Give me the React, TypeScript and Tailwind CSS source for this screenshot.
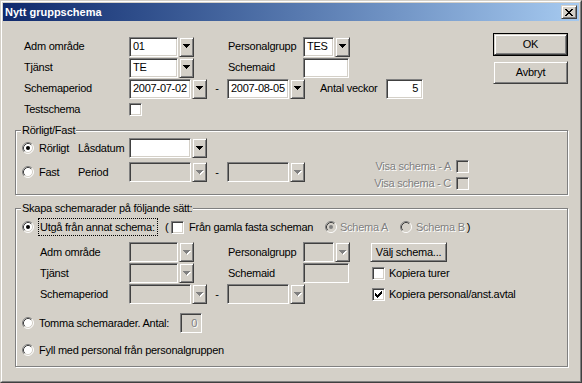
import React from "react";

const sunken =
  "border border-t-[#808080] border-l-[#808080] border-b-white border-r-white shadow-[inset_1px_1px_0_#404040,inset_-1px_-1px_0_#d4d0c8]";
const raised =
  "border border-t-[#d4d0c8] border-l-[#d4d0c8] border-b-[#404040] border-r-[#404040] shadow-[inset_1px_1px_0_#fff,inset_-1px_-1px_0_#808080]";
const dis = "text-[#808080] [text-shadow:1px_1px_0_#fff]";

function Arrow({ disabled }: { disabled?: boolean }) {
  const rects = (fill: string, dx: number, dy: number) => (
    <g fill={fill} transform={`translate(${dx},${dy})`}>
      <rect x="0" y="0" width="7" height="1" />
      <rect x="1" y="1" width="5" height="1" />
      <rect x="2" y="2" width="3" height="1" />
      <rect x="3" y="3" width="1" height="1" />
    </g>
  );
  return (
    <svg width="8" height="5" viewBox="0 0 8 5" shapeRendering="crispEdges">
      {disabled ? (
        <>
          {rects("#ffffff", 1, 1)}
          {rects("#808080", 0, 0)}
        </>
      ) : (
        rects("#000000", 0, 0)
      )}
    </svg>
  );
}

function DropBtn({ disabled }: { disabled?: boolean }) {
  return (
    <div className={`w-[15px] h-full bg-[#d4d0c8] flex items-center justify-center ${raised}`}>
      <Arrow disabled={disabled} />
    </div>
  );
}

function Combo({
  className,
  value,
  disabled,
}: {
  className: string;
  value?: string;
  disabled?: boolean;
}) {
  return (
    <div className={`flex h-[20px] gap-[1px] shrink-0 ${className}`}>
      <div
        className={`flex-1 h-full flex items-center pl-[3px] overflow-hidden ${sunken} ${
          disabled ? "bg-[#d4d0c8]" : "bg-white"
        }`}
      >
        {value}
      </div>
      <DropBtn disabled={disabled} />
    </div>
  );
}

function Field({
  className,
  value,
  disabled,
  right,
}: {
  className: string;
  value?: string;
  disabled?: boolean;
  right?: boolean;
}) {
  return (
    <div
      className={`h-[20px] flex items-center shrink-0 ${right ? "justify-end pr-[4px]" : "pl-[3px]"} ${sunken} ${
        disabled ? `bg-[#d4d0c8] ${dis}` : "bg-white"
      } ${className}`}
    >
      {value}
    </div>
  );
}

function Radio({ checked, disabled }: { checked?: boolean; disabled?: boolean }) {
  return (
    <svg width="12" height="12" viewBox="0 0 12 12" className="shrink-0">
      <circle cx="6" cy="6" r="5" fill={disabled ? "#d4d0c8" : "#ffffff"} />
      <path d="M2.11 9.89 A5.5 5.5 0 0 1 9.89 2.11" stroke="#808080" fill="none" />
      <path d="M9.89 2.11 A5.5 5.5 0 0 1 2.11 9.89" stroke="#ffffff" fill="none" />
      <path d="M2.82 9.18 A4.5 4.5 0 0 1 9.18 2.82" stroke="#404040" fill="none" />
      <path d="M9.18 2.82 A4.5 4.5 0 0 1 2.82 9.18" stroke="#d4d0c8" fill="none" />
      {checked && <circle cx="6" cy="6" r="2" fill={disabled ? "#808080" : "#000000"} />}
    </svg>
  );
}

function Check({ checked, disabled }: { checked?: boolean; disabled?: boolean }) {
  return (
    <div
      className={`w-[13px] h-[13px] shrink-0 flex items-center justify-center ${sunken} ${
        disabled ? "bg-[#d4d0c8]" : "bg-white"
      }`}
    >
      {checked && (
        <svg width="7" height="7" viewBox="0 0 7 7" shapeRendering="crispEdges">
          <path
            d="M0 2h1v1h1v1h1v-1h1v-1h1v-1h1v-1h1v3h-1v1h-1v1h-1v1h-1v1h-1v-1h-1v-1h-1v-1h-1z"
            fill="#000"
          />
        </svg>
      )}
    </div>
  );
}

function GroupBox({
  title,
  className,
  children,
}: {
  title: string;
  className: string;
  children: React.ReactNode;
}) {
  return (
    <div
      className={`relative border border-[#808080] shadow-[inset_1px_1px_0_#fff,1px_1px_0_#fff] ${className}`}
    >
      <span className="absolute left-[5px] top-[-8px] bg-[#d4d0c8] px-[1px] leading-[14px]">
        {title}
      </span>
      {children}
    </div>
  );
}

export default function App() {
  return (
    <div className="w-[582px] h-[383px] bg-[#d4d0c8] font-['Liberation_Sans',Arial,sans-serif] text-[11px] tracking-[-0.25px] whitespace-nowrap text-black leading-[13px] border border-t-[#d4d0c8] border-l-[#d4d0c8] border-b-[#404040] border-r-[#404040]">
      <div className="h-full flex flex-col p-[1px] border border-t-white border-l-white border-b-[#808080] border-r-[#808080]">
        {/* Title bar */}
        <div className="h-[18px] shrink-0 bg-linear-to-r from-[#10296c] to-[#a6caf0] flex items-center pl-[2px] pr-[2px]">
          <span className="text-white font-bold text-[11px] tracking-normal">Nytt gruppschema</span>
          <div
            className={`ml-auto w-[16px] h-[14px] bg-[#d4d0c8] flex items-center justify-center ${raised}`}
          >
            <svg width="8" height="7" viewBox="0 0 8 7" shapeRendering="crispEdges">
              <path
                d="M0 0h2v1h1v1h2v-1h1v-1h2v1h-1v1h-1v1h-1v1h1v1h1v1h1v1h-2v-1h-1v-1h-2v1h-1v1h-2v-1h1v-1h1v-1h1v-1h-1v-1h-1v-1h-1z"
                fill="#000"
              />
            </svg>
          </div>
        </div>

        {/* Body */}
        <div className="flex-1 flex flex-col pt-[12px] pl-[12px] pr-[11px]">
          {/* Top section */}
          <div className="flex items-start">
            <div className="mt-[3px] ml-[9px] flex flex-col">
              <div className="h-[21px] flex items-center">
                <span className="w-[105px]">Adm område</span>
                <div className="w-[99px]">
                  <Combo className="w-[65px]" value="01" />
                </div>
                <span className="w-[75px]">Personalgrupp</span>
                <Combo className="w-[47px]" value="TES" />
              </div>
              <div className="h-[21px] flex items-center">
                <span className="w-[105px]">Tjänst</span>
                <div className="w-[99px]">
                  <Combo className="w-[65px]" value="TE" />
                </div>
                <span className="w-[75px]">Schemaid</span>
                <Field className="w-[46px]" />
              </div>
              <div className="h-[21px] flex items-center">
                <span className="w-[105px]">Schemaperiod</span>
                <Combo className="w-[78px]" value="2007-07-02" />
                <span className="w-[20px] text-center">-</span>
                <Combo className="w-[78px]" value="2007-08-05" />
                <span className="ml-[15px] w-[66px]">Antal veckor</span>
                <Field className="w-[37px]" value="5" right />
              </div>
              <div className="h-[21px] flex items-center">
                <span className="w-[105px]">Testschema</span>
                <Check />
              </div>
            </div>
            <div className="ml-auto w-[75px] flex flex-col gap-[5px]">
              <div className="h-[23px] border border-black">
                <div
                  className={`h-full bg-[#d4d0c8] flex items-center justify-center ${raised}`}
                >
                  OK
                </div>
              </div>
              <div className={`h-[23px] bg-[#d4d0c8] flex items-center justify-center ${raised}`}>
                Avbryt
              </div>
            </div>
          </div>

          {/* Group 1 */}
          <GroupBox title="Rörligt/Fast" className="mt-[10px] h-[65px]">
            <div className="flex items-start pt-[7px] pl-[6px]">
              <div className="flex flex-col gap-[4px]">
                <div className="h-[20px] flex items-center">
                  <div className="w-[56px] flex items-center gap-[5px]">
                    <Radio checked />
                    <span>Rörligt</span>
                  </div>
                  <span className="w-[51px]">Låsdatum</span>
                  <Combo className="w-[78px]" />
                </div>
                <div className="h-[20px] flex items-center">
                  <div className="w-[56px] flex items-center gap-[5px]">
                    <Radio />
                    <span>Fast</span>
                  </div>
                  <span className="w-[51px]">Period</span>
                  <Combo className="w-[78px]" disabled />
                  <span className="w-[20px] text-center">-</span>
                  <Combo className="w-[78px]" disabled />
                </div>
              </div>
              <div className="ml-auto mr-[98px] mt-[22px] flex flex-col gap-[4px] items-end">
                <div className="h-[13px] flex items-center gap-[5px]">
                  <span className={dis}>Visa schema - A</span>
                  <Check disabled />
                </div>
                <div className="h-[13px] flex items-center gap-[5px]">
                  <span className={dis}>Visa schema - C</span>
                  <Check disabled />
                </div>
              </div>
            </div>
          </GroupBox>

          {/* Group 2 */}
          <GroupBox title="Skapa schemarader på följande sätt:" className="mt-[13px] h-[159px]">
            <div className="flex flex-col pt-[9px] pl-[6px]">
              <div className="h-[18px] flex items-center">
                <Radio checked />
                <span className="ml-[4px] w-[120px] h-[18px] border border-dotted border-black flex items-center pl-[1px]">
                  Utgå från annat schema:
                </span>
                <span className="ml-[7px] w-[6px]">(</span>
                <Check />
                <span className="ml-[5px] w-[136px]">Från gamla fasta scheman</span>
                <Radio checked disabled />
                <span className={`ml-[3px] w-[60px] ${dis}`}>Schema A</span>
                <Radio disabled />
                <span className={`ml-[4px] ${dis}`}>Schema B</span>
                <span className="ml-[2px]">)</span>
              </div>

              <div className="mt-[6px] ml-[18px] flex flex-col gap-[1px]">
                <div className="h-[20px] flex items-center">
                  <span className="w-[89px]">Adm område</span>
                  <div className="w-[99px]">
                    <Combo className="w-[65px]" disabled />
                  </div>
                  <span className="w-[75px]">Personalgrupp</span>
                  <div className="w-[67px]">
                    <Combo className="w-[47px]" disabled />
                  </div>
                  <div className={`w-[77px] h-[20px] bg-[#d4d0c8] flex items-center justify-center ${raised}`}>
                    Välj schema...
                  </div>
                </div>
                <div className="h-[20px] flex items-center">
                  <span className="w-[89px]">Tjänst</span>
                  <div className="w-[99px]">
                    <Combo className="w-[65px]" disabled />
                  </div>
                  <span className="w-[75px]">Schemaid</span>
                  <div className="w-[67px]">
                    <Field className="w-[46px]" disabled />
                  </div>
                  <div className="ml-[2px] flex items-center gap-[4px]">
                    <Check />
                    <span>Kopiera turer</span>
                  </div>
                </div>
                <div className="h-[20px] flex items-center">
                  <span className="w-[89px]">Schemaperiod</span>
                  <Combo className="w-[78px]" disabled />
                  <span className="w-[20px] text-center">-</span>
                  <Combo className="w-[78px]" disabled />
                  <div className="ml-[67px] flex items-center gap-[4px]">
                    <Check checked />
                    <span>Kopiera personal/anst.avtal</span>
                  </div>
                </div>
              </div>

              <div className="mt-[9px] h-[20px] flex items-center">
                <Radio />
                <span className="ml-[5px] w-[141px]">Tomma schemarader. Antal:</span>
                <Field className="w-[22px]" value="0" disabled right />
              </div>
              <div className="mt-[7px] h-[20px] flex items-center">
                <Radio />
                <span className="ml-[5px]">Fyll med personal från personalgruppen</span>
              </div>
            </div>
          </GroupBox>
        </div>
      </div>
    </div>
  );
}
